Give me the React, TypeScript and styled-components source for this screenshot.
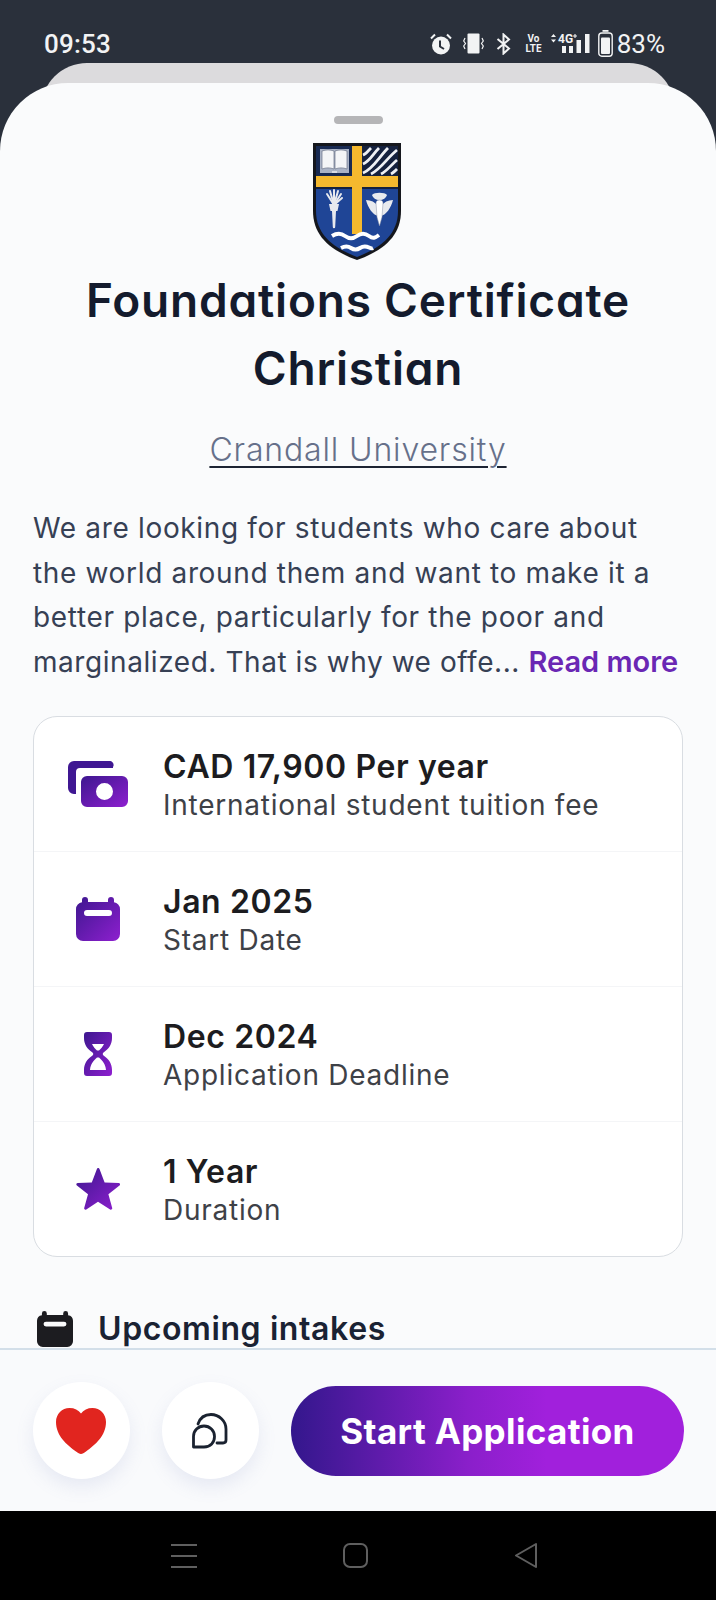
import React from "react";
import styled, { createGlobalStyle } from "styled-components";

const GlobalStyle = createGlobalStyle`
  html, body {
    margin: 0;
    padding: 0;
    background: #000;
  }
  * {
    box-sizing: border-box;
  }
`;

const Screen = styled.div`
  width: 716px;
  height: 1600px;
  display: flex;
  flex-direction: column;
  overflow: hidden;
  background: #2a303b;
  font-family: Inter, "Liberation Sans", sans-serif;
`;

const StatusBar = styled.div`
  height: 63px;
  flex: none;
  display: flex;
  align-items: center;
  justify-content: space-between;
  padding: 24px 51px 0 44px;
  color: #f2f3f4;
  font-family: Roboto, sans-serif;
`;

const Clock = styled.span`
  font-size: 26px;
  font-weight: 500;
  letter-spacing: 0.2px;
`;

const StatusIcons = styled.div`
  display: flex;
  align-items: center;
`;

const Percent = styled.span`
  font-size: 26px;
  font-weight: 400;
  margin-left: 4px;
`;

const VoLte = styled.span`
  display: flex;
  flex-direction: column;
  align-items: center;
  width: 15px;
  font-size: 11px;
  font-weight: 700;
  line-height: 10px;
  margin: 0 10px 0 15px;
  transform: scaleX(0.9);
`;

const BackSheet = styled.div`
  flex: none;
  height: 60px;
  margin: 0 41px -40px;
  border-radius: 46px 46px 0 0;
  background: #dcdbdd;
`;

const Sheet = styled.div`
  position: relative;
  flex: none;
  height: 1428px;
  border-radius: 68px 68px 0 0;
  background: #fafbfc;
  display: flex;
  flex-direction: column;
  overflow: hidden;
`;

const Content = styled.div`
  flex: 1;
  min-height: 0;
  overflow: hidden;
  padding: 33px 33px 0;
  display: flex;
  flex-direction: column;
  align-items: center;
`;

const Handle = styled.div`
  width: 49px;
  height: 8px;
  border-radius: 4px;
  background: #b5b5b7;
  flex: none;
`;

const Crest = styled.svg`
  width: 88px;
  height: 117px;
  margin: 19px 3px 0 0;
  flex: none;
`;

const Title = styled.h1`
  margin: 6px 0 0;
  width: 100%;
  text-align: center;
  font-family: Inter, sans-serif;
  font-feature-settings: "cv11" 1;
  font-size: 46px;
  font-weight: 600;
  line-height: 68px;
  letter-spacing: 0.8px;
  color: #141b2d;
`;

const School = styled.a`
  margin-top: 27px;
  font-size: 32px;
  font-weight: 300;
  line-height: 42px;
  color: #66708a;
  letter-spacing: 0.85px;
  text-decoration: underline;
  text-decoration-color: #1d2433;
  text-underline-offset: 5px;
  text-decoration-thickness: 2px;
`;

const Description = styled.p`
  margin: 35px 0 0;
  width: 100%;
  font-size: 28px;
  font-weight: 400;
  line-height: 44.6px;
  letter-spacing: 0.66px;
  color: #364054;
  white-space: nowrap;
`;

const LastLine = styled.span`
  letter-spacing: 0.56px;
`;

const ReadMore = styled.span`
  color: #6a27b4;
  font-size: 29px;
  font-weight: 600;
  letter-spacing: 0;
`;

const Card = styled.div`
  flex: none;
  width: 100%;
  margin-top: 32px;
  border: 1.5px solid #d9dde2;
  border-radius: 24px;
  background: #fff;
`;

const Row = styled.div`
  height: 135px;
  display: flex;
  align-items: center;
  border-bottom: 1.5px solid #f4f5f7;
  &:last-child {
    height: 134px;
    border-bottom: none;
  }
`;

const RowIcon = styled.div`
  width: 127px;
  margin-right: 2px;
  flex: none;
  display: flex;
  justify-content: center;
`;

const RowText = styled.div`
  display: flex;
  flex-direction: column;
  padding-top: 4px;
`;

const RowTitle = styled.span`
  font-size: 32px;
  font-weight: 600;
  line-height: 38px;
  letter-spacing: 0.6px;
  color: #1c1c20;
`;

const RowSub = styled.span`
  font-size: 28px;
  font-weight: 400;
  line-height: 38px;
  letter-spacing: 0.75px;
  color: #3e4147;
`;

const SectionHead = styled.div`
  flex: none;
  width: 100%;
  margin-top: 52px;
  display: flex;
  align-items: center;
  gap: 25px;
  padding-left: 4px;
`;

const SectionTitle = styled.h2`
  margin: 0;
  font-size: 32px;
  font-weight: 600;
  line-height: 40px;
  letter-spacing: 0.6px;
  color: #1a2233;
`;

const Footer = styled.div`
  flex: none;
  height: 163px;
  border-top: 2px solid #d3dfe9;
  background: #f9fafc;
  display: flex;
  align-items: center;
  gap: 32px;
  padding: 0 32px 0 33px;
`;

const RoundButton = styled.button`
  width: 97px;
  height: 97px;
  flex: none;
  border: none;
  border-radius: 50%;
  background: #fff;
  box-shadow: 0 8px 18px rgba(120, 135, 190, 0.14);
  display: flex;
  align-items: center;
  justify-content: center;
  padding: 0;
`;

const StartButton = styled.button`
  flex: 1;
  height: 90px;
  border: none;
  border-radius: 45px;
  background: linear-gradient(90deg, #33178c 0%, #8a1fca 45%, #a120dc 65%, #a120dc 100%);
  color: #fff;
  font-family: Inter, sans-serif;
  font-size: 35px;
  font-weight: 700;
  letter-spacing: 0.36px;
`;

const NavBar = styled.div`
  flex: 1;
  background: #000;
  display: flex;
  align-items: center;
  gap: 146px;
  padding-left: 171px;
`;

const purple = "purpleGrad";

const GradientDefs = () => (
  <svg width="0" height="0" style={{ position: "absolute" }}>
    <defs>
      <linearGradient id={purple} x1="0" y1="0" x2="1" y2="1">
        <stop offset="0" stopColor="#3d178f" />
        <stop offset="1" stopColor="#8e1fcf" />
      </linearGradient>
    </defs>
  </svg>
);

const MoneyIcon = () => (
  <svg width="60" height="46" viewBox="0 0 60 46">
    <path
      d="M6 0h35a4 4 0 0 1 4 6v1H12a4 4 0 0 0-4 4v22H6a6 6 0 0 1-6-6V6a6 6 0 0 1 6-6z"
      fill="#3f1792"
    />
    <path
      fillRule="evenodd"
      d="M19 15h35a6 6 0 0 1 6 6v19a6 6 0 0 1-6 6H19a6 6 0 0 1-6-6V21a6 6 0 0 1 6-6zm17.500 7a8.500 8.500 0 1 0 0 17 8.500 8.500 0 0 0 0-17z"
      fill={`url(#${purple})`}
    />
  </svg>
);

const CalendarIcon = ({ fill, size }: { fill: string; size: number }) => (
  <svg width={size} height={size} viewBox="0 0 44 44">
    <path
      fillRule="evenodd"
      d="M9 0a3 3 0 0 1 3 3v2h20V3a3 3 0 0 1 6 0v2.200A7 7 0 0 1 44 12v25a7 7 0 0 1-7 7H7a7 7 0 0 1-7-7V12a7 7 0 0 1 6-6.800V3a3 3 0 0 1 3-3zM11 13a3 3 0 0 0 0 6h22a3 3 0 0 0 0-6z"
      fill={fill}
    />
  </svg>
);

const HourglassIcon = () => (
  <svg width="28" height="44" viewBox="0 0 28 44">
    <path
      fillRule="evenodd"
      d="M3 0h22a3 3 0 0 1 3 3v3c0 6-3 11-8.500 14.500-1 .7-1 2.300 0 3C25 27 28 32 28 38v3a3 3 0 0 1-3 3H3a3 3 0 0 1-3-3v-3c0-6 3-11 8.500-14.500 1-.7 1-2.300 0-3C3 17 0 12 0 6V3a3 3 0 0 1 3-3zM8 12c1 2.500 3.500 5 5 6.500h2c1.500-1.500 4-4 5-6.500zM13 25.500C9.500 28.500 6.500 32 6 38h16c-.5-6-3.500-9.500-7-12.500z"
      fill={`url(#${purple})`}
    />
  </svg>
);

const StarIcon = () => (
  <svg width="44" height="42" viewBox="0 0 44 42">
    <path
      d="M22 0c.8 0 1.300.5 1.600 1.300l5 13.200 14.100.6c1.400.1 1.800 1.600.8 2.400l-11.100 8.800 3.800 13.600c.4 1.300-1 2.300-2.100 1.600L22 33.700l-11.700 7.800c-1.100.7-2.500-.3-2.100-1.600L12 26.300.9 17.500c-1-.8-.6-2.300.8-2.400l14.100-.6 5-13.200C21.100.500 21.500 0 22 0z"
      fill={`url(#${purple})`}
    />
  </svg>
);

const HeartIcon = () => (
  <svg width="50" height="46" viewBox="0 0 50 46" style={{ marginRight: 2 }}>
    <path
      d="M25 46c-1.500 0-3-1-5-2.500C11 37 0 28 0 14 0 6 6 0 13.500 0 18.500 0 22.500 2 25 5.500 27.500 2 31.500 0 36.500 0 44 0 50 6 50 14c0 14-11 23-20 29.500-2 1.500-3.500 2.500-5 2.500z"
      fill="#e1251f"
    />
  </svg>
);

const ShapesIcon = () => (
  <svg width="36" height="36" viewBox="0 0 36 36" fill="none" stroke="#1a2230" strokeWidth="2.800" strokeLinecap="round" strokeLinejoin="round" style={{ marginRight: 2 }}>
    <path d="M1.500 34V23.500a10.500 10.500 0 0 1 21 0c0 6-4 10.500-10.500 10.500z" />
    <path d="M6 11C8 5 12 1.500 19 1.500 27 1.500 34 8 34 16v11c0 2-1 3-3 3h-6" />
  </svg>
);

const AlarmIcon = () => (
  <svg width="22" height="22" viewBox="0 0 22 22" fill="#f2f3f4">
    <circle cx="11" cy="12.500" r="9" />
    <path d="M10 7.500v6l4 2.500" fill="none" stroke="#2a303b" strokeWidth="2" />
    <path d="M1 5.500 5 1.500M21 5.500 17 1.500" stroke="#f2f3f4" strokeWidth="2" fill="none" />
  </svg>
);

const VibrateIcon = () => (
  <svg width="21" height="21" viewBox="0 0 21 21" fill="none" stroke="#f2f3f4" strokeWidth="1.200" style={{ marginLeft: 11 }}>
    <rect x="4.500" y="0.500" width="12" height="20" rx="1" fill="#f2f3f4" stroke="none" />
    <path d="M2 5 .7 8l1.800 2.500L.7 13 2 16M19 5l1.300 3-1.800 2.500L20.300 13 19 16" />
  </svg>
);

const BluetoothIcon = () => (
  <svg width="15" height="22" viewBox="0 0 15 22" fill="none" stroke="#f2f3f4" strokeWidth="2" style={{ marginLeft: 12 }}>
    <path d="M1.500 6 13 15.500 7.500 20.500V1.500L13 6.500 1.500 16" />
  </svg>
);

const SignalIcon = () => (
  <svg width="40" height="22" viewBox="0 0 40 22">
    <path d="M0 4 2.500 1 5 4zM0 6.500 2.500 9.500 5 6.500z" fill="#f2f3f4" />
    <text x="7" y="10" fontSize="12" fontWeight="700" fontFamily="Roboto, sans-serif" fill="#f2f3f4">4G</text>
    <path d="M22 3h4M24 1v4" stroke="#f2f3f4" strokeWidth="1.100" />
    <rect x="11" y="13" width="4" height="7" fill="#f2f3f4" />
    <rect x="18" y="13" width="4" height="7" fill="#f2f3f4" />
    <rect x="25.500" y="7" width="4.500" height="13" fill="#f2f3f4" />
    <rect x="34" y="1" width="4.500" height="19" fill="#f2f3f4" />
  </svg>
);

const BatteryIcon = () => (
  <svg width="15" height="27" viewBox="0 0 15 27" fill="none" style={{ marginLeft: 7 }}>
    <rect x="0.800" y="3" width="13.400" height="23.200" rx="3" stroke="#f2f3f4" strokeWidth="1.400" />
    <rect x="4.500" y="0" width="6" height="1.800" fill="#f2f3f4" />
    <rect x="3" y="7.500" width="9" height="16.500" rx="1" fill="#f2f3f4" />
  </svg>
);

const CrestLogo = () => (
  <Crest viewBox="0 0 88 117">
    <path d="M0 0h88v68c0 24-16 39-44 49C16 107 0 92 0 68z" fill="#15171d" />
    <path d="M3 3h82v65c0 22-15 36-41 46C18 104 3 90 3 68z" fill="#1f4596" />
    <rect x="3" y="3" width="36" height="30" fill="#182a52" />
    <rect x="49" y="3" width="36" height="30" fill="#15213e" />
    <rect x="7" y="6" width="29" height="24" fill="#aab3c6" />
    <path d="M9 8c4-1.500 8-1.500 12 0v18c-4-1.500-8-1.500-12 0zM22 8c4-1.500 8-1.500 12 0v18c-4-1.500-8-1.500-12 0z" fill="#f4f5f7" stroke="#6b7488" strokeWidth="0.700" />
    <path d="M19 28h5v2h-5z" fill="#d9dde6" />
    <g stroke="#eef0f4" strokeWidth="2.800" fill="none">
      <path d="M50 12c3-1 5-4 8-7" />
      <path d="M50 21c7-3 10-10 16-16" />
      <path d="M50 30c10-4 16-16 25-25" />
      <path d="M58 31c10-5 16-16 26-24" />
      <path d="M68 31c6-3 10-9 16-14" />
      <path d="M78 31c2-1 4-3 6-5" />
    </g>
    <path d="M3 33h82v11H3z" fill="#f5b92e" />
    <path d="M39 3h10v88H39z" fill="#f5b92e" />
    <path d="M3 44h36v2H3zM49 44h36v2H49z" fill="#15213e" />
    <g stroke="#e8eaee" strokeWidth="2" strokeLinecap="round" fill="none">
      <path d="M21 62 14 51" />
      <path d="M21 62 17 48" />
      <path d="M21 62 21 47" />
      <path d="M21 62 25 48" />
      <path d="M21 62 28 51" />
      <path d="M21 62 29 55" />
    </g>
    <path d="M16 61h10l-1.500 7h-7z" fill="#e8eaee" />
    <path d="M19 68h4l-.8 16a1.200 1.200 0 0 1-2.400 0z" fill="#e8eaee" />
    <path d="M59 52c2-3 13-3 15 0-1 3-4 5-7.500 5S60 55 59 52z" fill="#e8eaee" />
    <path d="M53 57c5 0 9 2 12 6v10c-5-1-10-8-12-16zM80 57c-5 0-9 2-12 6v10c5-1 10-8 12-16z" fill="#e8eaee" />
    <path d="M63 60c0-2 1.500-3 3.500-3s3.500 1 3.500 3l-1 14-2.500 9-2.500-9z" fill="#fff" stroke="#8b93a8" strokeWidth="0.500" />
    <g stroke="#fff" strokeWidth="4" fill="none">
      <path d="M19 93c5-3 9-3 13 0s8 3 12 0 8-3 12 0 6 2 10-1" />
      <path d="M28 105c4-2 7-2 10 0s6 2 9 0 6-2 9-.5 3 1 4 .5" />
    </g>
  </Crest>
);

const rows = [
  { icon: <MoneyIcon />, title: "CAD 17,900 Per year", sub: "International student tuition fee" },
  { icon: <CalendarIcon fill={`url(#${purple})`} size={44} />, title: "Jan 2025", sub: "Start Date" },
  { icon: <HourglassIcon />, title: "Dec 2024", sub: "Application Deadline" },
  { icon: <StarIcon />, title: "1 Year", sub: "Duration" },
];

export default function App() {
  return (
    <>
      <GlobalStyle />
      <GradientDefs />
      <Screen>
        <StatusBar>
          <Clock>09:53</Clock>
          <StatusIcons>
            <AlarmIcon />
            <VibrateIcon />
            <BluetoothIcon />
            <VoLte>
              <span>Vo</span>
              <span>LTE</span>
            </VoLte>
            <SignalIcon />
            <BatteryIcon />
            <Percent>83%</Percent>
          </StatusIcons>
        </StatusBar>
        <BackSheet />
        <Sheet>
          <Content>
            <Handle />
            <CrestLogo />
            <Title>
              Foundations Certificate
              <br />
              Christian
            </Title>
            <School>Crandall University</School>
            <Description>
              We are looking for students who care about
              <br />
              the world around them and want to make it a
              <br />
              better place, particularly for the poor and
              <br />
              <LastLine>marginalized. That is why we offe... </LastLine>
              <ReadMore>Read more</ReadMore>
            </Description>
            <Card>
              {rows.map((row) => (
                <Row key={row.title}>
                  <RowIcon>{row.icon}</RowIcon>
                  <RowText>
                    <RowTitle>{row.title}</RowTitle>
                    <RowSub>{row.sub}</RowSub>
                  </RowText>
                </Row>
              ))}
            </Card>
            <SectionHead>
              <CalendarIcon fill="#1c1c20" size={36} />
              <SectionTitle>Upcoming intakes</SectionTitle>
            </SectionHead>
          </Content>
          <Footer>
            <RoundButton>
              <HeartIcon />
            </RoundButton>
            <RoundButton>
              <ShapesIcon />
            </RoundButton>
            <StartButton>Start Application</StartButton>
          </Footer>
        </Sheet>
        <NavBar>
          <svg width="26" height="24" viewBox="0 0 26 24" stroke="#5f5f5f" strokeWidth="2">
            <path d="M0 1h26M0 12h26M0 23h26" />
          </svg>
          <svg width="25" height="25" viewBox="0 0 25 25" fill="none" stroke="#5f5f5f" strokeWidth="2">
            <rect x="1" y="1" width="23" height="23" rx="6" />
          </svg>
          <svg width="24" height="25" viewBox="0 0 24 25" fill="none" stroke="#5f5f5f" strokeWidth="2" strokeLinejoin="round">
            <path d="M22 1 2 12.500 22 24z" />
          </svg>
        </NavBar>
      </Screen>
    </>
  );
}
